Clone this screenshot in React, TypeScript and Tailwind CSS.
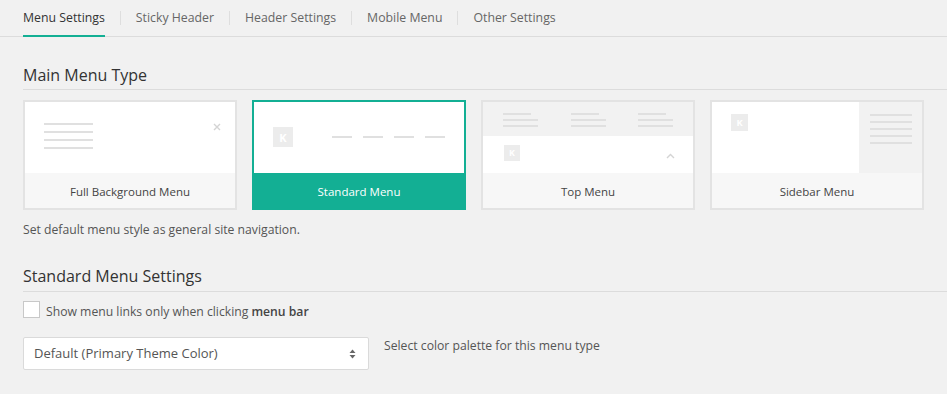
import React from "react";

const tabs = ["Menu Settings", "Sticky Header", "Header Settings", "Mobile Menu", "Other Settings"];

function KBox({ size }: { size: number }) {
  return (
    <div
      className="bg-[#ececec] flex items-center justify-center text-white font-bold leading-none"
      style={{ width: size, height: size, fontSize: size * 0.55 }}
    >
      K
    </div>
  );
}

function Card({
  label,
  selected,
  children,
}: {
  label: string;
  selected?: boolean;
  children: React.ReactNode;
}) {
  return (
    <div
      className={
        selected
          ? "w-[214px] h-[110px] border-2 border-[#13af94] flex flex-col bg-white"
          : "w-[214px] h-[110px] border-2 border-[#e3e3e3] flex flex-col bg-white"
      }
    >
      <div className="h-[71px] relative overflow-hidden bg-white">{children}</div>
      <div
        className={
          selected
            ? "flex-1 bg-[#13af94] text-white flex items-center justify-center text-[11.5px] pt-[3px]"
            : "flex-1 bg-[#f7f7f7] text-[#444] flex items-center justify-center text-[11.5px] pt-[3px]"
        }
      >
        {label}
      </div>
    </div>
  );
}

export default function App() {
  return (
    <div className="w-[947px] h-[394px] bg-[#f1f1f1] overflow-hidden font-['Open_Sans',sans-serif] text-[#555]">
      {/* Tabs */}
      <div className="h-[37px] border-b border-[#dcdcdc] flex items-stretch pl-[23px]">
        {tabs.map((t, i) => (
          <React.Fragment key={t}>
            {i > 0 && (
              <div className="flex items-center px-[15px]">
                <div className="w-px h-[14px] bg-[#dedede]" />
              </div>
            )}
            <div
              className={
                i === 0
                  ? "flex items-center text-[12.3px] text-[#333] border-b-2 border-[#13af94] mb-[-1px] pt-[1px]"
                  : "flex items-center text-[12.3px] text-[#666] border-b-2 border-transparent mb-[-1px] pt-[1px]"
              }
            >
              {t}
            </div>
          </React.Fragment>
        ))}
      </div>

      <div className="pl-[23px]">
        <div className="mt-[27px] border-b border-[#dcdcdc] pb-[3px] text-[16px] leading-[22px] text-[#333]">
          Main Menu Type
        </div>

        <div className="mt-[10px] flex gap-[15px]">
          <Card label="Full Background Menu">
            <div className="absolute left-[19px] top-[21px] flex flex-col gap-[6px]">
              {[0, 1, 2, 3].map((k) => (
                <div key={k} className="w-[49px] h-[2px] bg-[#e0e0e0]" />
              ))}
            </div>
            <svg className="absolute left-[188px] top-[21px]" width="8" height="8" viewBox="0 0 8 8">
              <path d="M1 1L7 7M7 1L1 7" stroke="#d4d4d4" strokeWidth="1.4" />
            </svg>
          </Card>

          <Card label="Standard Menu" selected>
            <div className="absolute left-[19px] top-[25px]">
              <KBox size={20} />
            </div>
            <div className="absolute left-[78px] top-[34px] flex gap-[11px]">
              {[0, 1, 2, 3].map((k) => (
                <div key={k} className="w-[20px] h-[2px] bg-[#e0e0e0]" />
              ))}
            </div>
          </Card>

          <Card label="Top Menu">
            <div className="h-[34px] bg-[#f2f2f2] flex justify-between px-[20px] pt-[11px]">
              {[0, 1, 2].map((k) => (
                <div key={k} className="flex flex-col gap-[4px]">
                  <div className="w-[28px] h-[2px] bg-[#e0e0e0]" />
                  <div className="w-[35px] h-[2px] bg-[#e0e0e0]" />
                  <div className="w-[35px] h-[2px] bg-[#e0e0e0]" />
                </div>
              ))}
            </div>
            <div className="absolute left-[21px] top-[43px]">
              <KBox size={16} />
            </div>
            <svg className="absolute left-[183px] top-[51px]" width="9" height="6" viewBox="0 0 9 6">
              <path d="M1 5L4.5 1.5L8 5" fill="none" stroke="#d4d4d4" strokeWidth="1.4" />
            </svg>
          </Card>

          <Card label="Sidebar Menu">
            <div className="flex h-full">
              <div className="w-[147px] h-full bg-white relative">
                <div className="absolute left-[19px] top-[12px]">
                  <KBox size={17} />
                </div>
              </div>
              <div className="flex-1 bg-[#f2f2f2] flex flex-col items-center gap-[5px] pt-[12px]">
                {[0, 1, 2, 3, 4].map((k) => (
                  <div key={k} className="w-[42px] h-[2px] bg-[#e0e0e0]" />
                ))}
              </div>
            </div>
          </Card>
        </div>

        <div className="mt-[10px] text-[12.2px] leading-[20px] text-[#555]">
          Set default menu style as general site navigation.
        </div>

        <div className="mt-[25px] border-b border-[#dcdcdc] pb-[4px] text-[16px] leading-[22px] text-[#333]">
          Standard Menu Settings
        </div>

        <div className="mt-[9px] h-[17px] flex items-center gap-[6px]">
          <div className="w-[17px] h-[17px] bg-white border border-[#c8c8c8] shrink-0" />
          <div className="text-[12.2px] leading-[17px] text-[#555] pt-[3px]">
            Show menu links only when clicking <span className="font-semibold text-[#444]">menu bar</span>
          </div>
        </div>

        <div className="mt-[19px] flex items-start gap-[15px]">
          <div className="w-[346px] h-[33px] bg-white border border-[#dadada] rounded-[2px] flex items-center justify-between pl-[10px] pr-[12px]">
            <span className="text-[13px] text-[#555]">Default (Primary Theme Color)</span>
            <svg width="7" height="10" viewBox="0 0 7 10">
              <path d="M0.5 4L3.5 0.5L6.5 4Z" fill="#666" />
              <path d="M0.5 6L3.5 9.5L6.5 6Z" fill="#666" />
            </svg>
          </div>
          <div className="text-[12.2px] text-[#555] leading-[18px]">
            Select color palette for this menu type
          </div>
        </div>
      </div>
    </div>
  );
}
